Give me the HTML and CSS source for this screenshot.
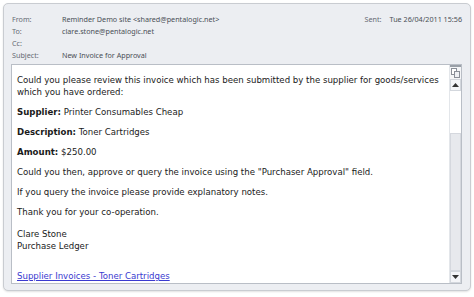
FILE: index.html
```html
<!DOCTYPE html>
<html>
<head>
<meta charset="utf-8">
<link rel="stylesheet" href="styles.css">
</head>
<body>
<div class="panel">
  <div class="header">
    <div class="row"><span class="label">From:</span><span class="value">Reminder Demo site &lt;shared@pentalogic.net&gt;</span><span class="sent"><span class="slabel">Sent:</span>Tue 26/04/2011 15:56</span></div>
    <div class="row"><span class="label">To:</span><span class="value">clare.stone@pentalogic.net</span></div>
    <div class="row"><span class="label">Cc:</span><span class="value"></span></div>
    <div class="row"><span class="label">Subject:</span><span class="value">New Invoice for Approval</span></div>
  </div>
  <div class="msg">
    <div class="content">
      <p>Could you please review this invoice which has been submitted by the supplier for goods/services which you have ordered:</p>
      <p><b>Supplier:</b> Printer Consumables Cheap</p>
      <p><b>Description:</b> Toner Cartridges</p>
      <p><b>Amount:</b> $250.00</p>
      <p>Could you then, approve or query the invoice using the "Purchaser Approval" field.</p>
      <p>If you query the invoice please provide explanatory notes.</p>
      <p>Thank you for your co-operation.</p>
      <p class="sig">Clare Stone<br>Purchase Ledger</p>
      <p class="link"><a href="#">Supplier Invoices - Toner Cartridges</a></p>
    </div>
    <div class="scroll">
      <div class="sicon">
        <svg width="9" height="10" viewBox="0 0 9 10"><rect x="0.5" y="0.5" width="5" height="6" fill="#fff" stroke="#8a8f98"/><rect x="3.5" y="3.5" width="5" height="6" fill="#eef0f4" stroke="#8a8f98"/></svg>
      </div>
      <div class="sbtn"><svg width="7" height="4" viewBox="0 0 7 4"><path d="M0 4 L3.5 0 L7 4 Z" fill="#333"/></svg></div>
      <div class="strack"></div>
      <div class="sthumb"></div>
      <div class="sbtn"><svg width="7" height="4" viewBox="0 0 7 4"><path d="M0 0 L3.5 4 L7 0 Z" fill="#333"/></svg></div>
    </div>
  </div>
</div>
</body>
</html>
```
FILE: styles.css
```css
html, body {
  margin: 0;
  padding: 0;
  background: #ffffff;
}
.panel {
  margin: 3px;
  width: 466px;
  height: 286px;
  border: 1px solid #c9ccd1;
  border-radius: 5px;
  background: #eceef2;
  box-shadow: 0 1px 2px rgba(0,0,0,0.12);
  display: flex;
  flex-direction: column;
}
.header {
  padding: 9px 8px 0 8px;
  font-family: "Noto Sans", "Open Sans", sans-serif;
  font-size: 7.2px;
  color: #555a62;
}
.row {
  display: flex;
  height: 12px;
  line-height: 12px;
  white-space: nowrap;
}
.label {
  width: 50px;
  color: #666a72;
}
.value {
  flex: 1;
  color: #4a4e56;
}
.sent {
  color: #4a4e56;
}
.slabel {
  color: #666a72;
  margin-right: 8px;
}
.msg {
  margin: 3px 8px 6px 7px;
  flex: 1;
  border: 1px solid #b9bec6;
  background: #ffffff;
  display: flex;
  min-height: 0;
}
.content {
  flex: 1;
  padding: 9px 0 0 5px;
  font-family: "DejaVu Sans", Verdana, sans-serif;
  font-size: 8.6px;
  line-height: 12px;
  color: #1a1a1a;
  overflow: hidden;
}
.content p {
  margin: 0 0 8px 0;
}
.content p.sig {
  margin-top: 10px;
  margin-bottom: 18px;
}
.content a {
  color: #3a3ad0;
  text-decoration: underline;
}
.scroll {
  width: 11px;
  display: flex;
  flex-direction: column;
  border-left: 1px solid #e3e6ea;
}
.sicon {
  height: 12px;
  border-top: 2px solid #9aa0a8;
  display: flex;
  align-items: center;
  justify-content: center;
  background: #f4f5f7;
}
.sbtn {
  height: 12px;
  display: flex;
  align-items: center;
  justify-content: center;
  background: #f4f5f8;
  border: 1px solid #d3d7dd;
  box-sizing: border-box;
}
.strack {
  height: 42px;
  background: #ffffff;
}
.sthumb {
  flex: 1;
  background: #e7e9ed;
  border: 1px solid #d5d8de;
  box-sizing: border-box;
}
```
